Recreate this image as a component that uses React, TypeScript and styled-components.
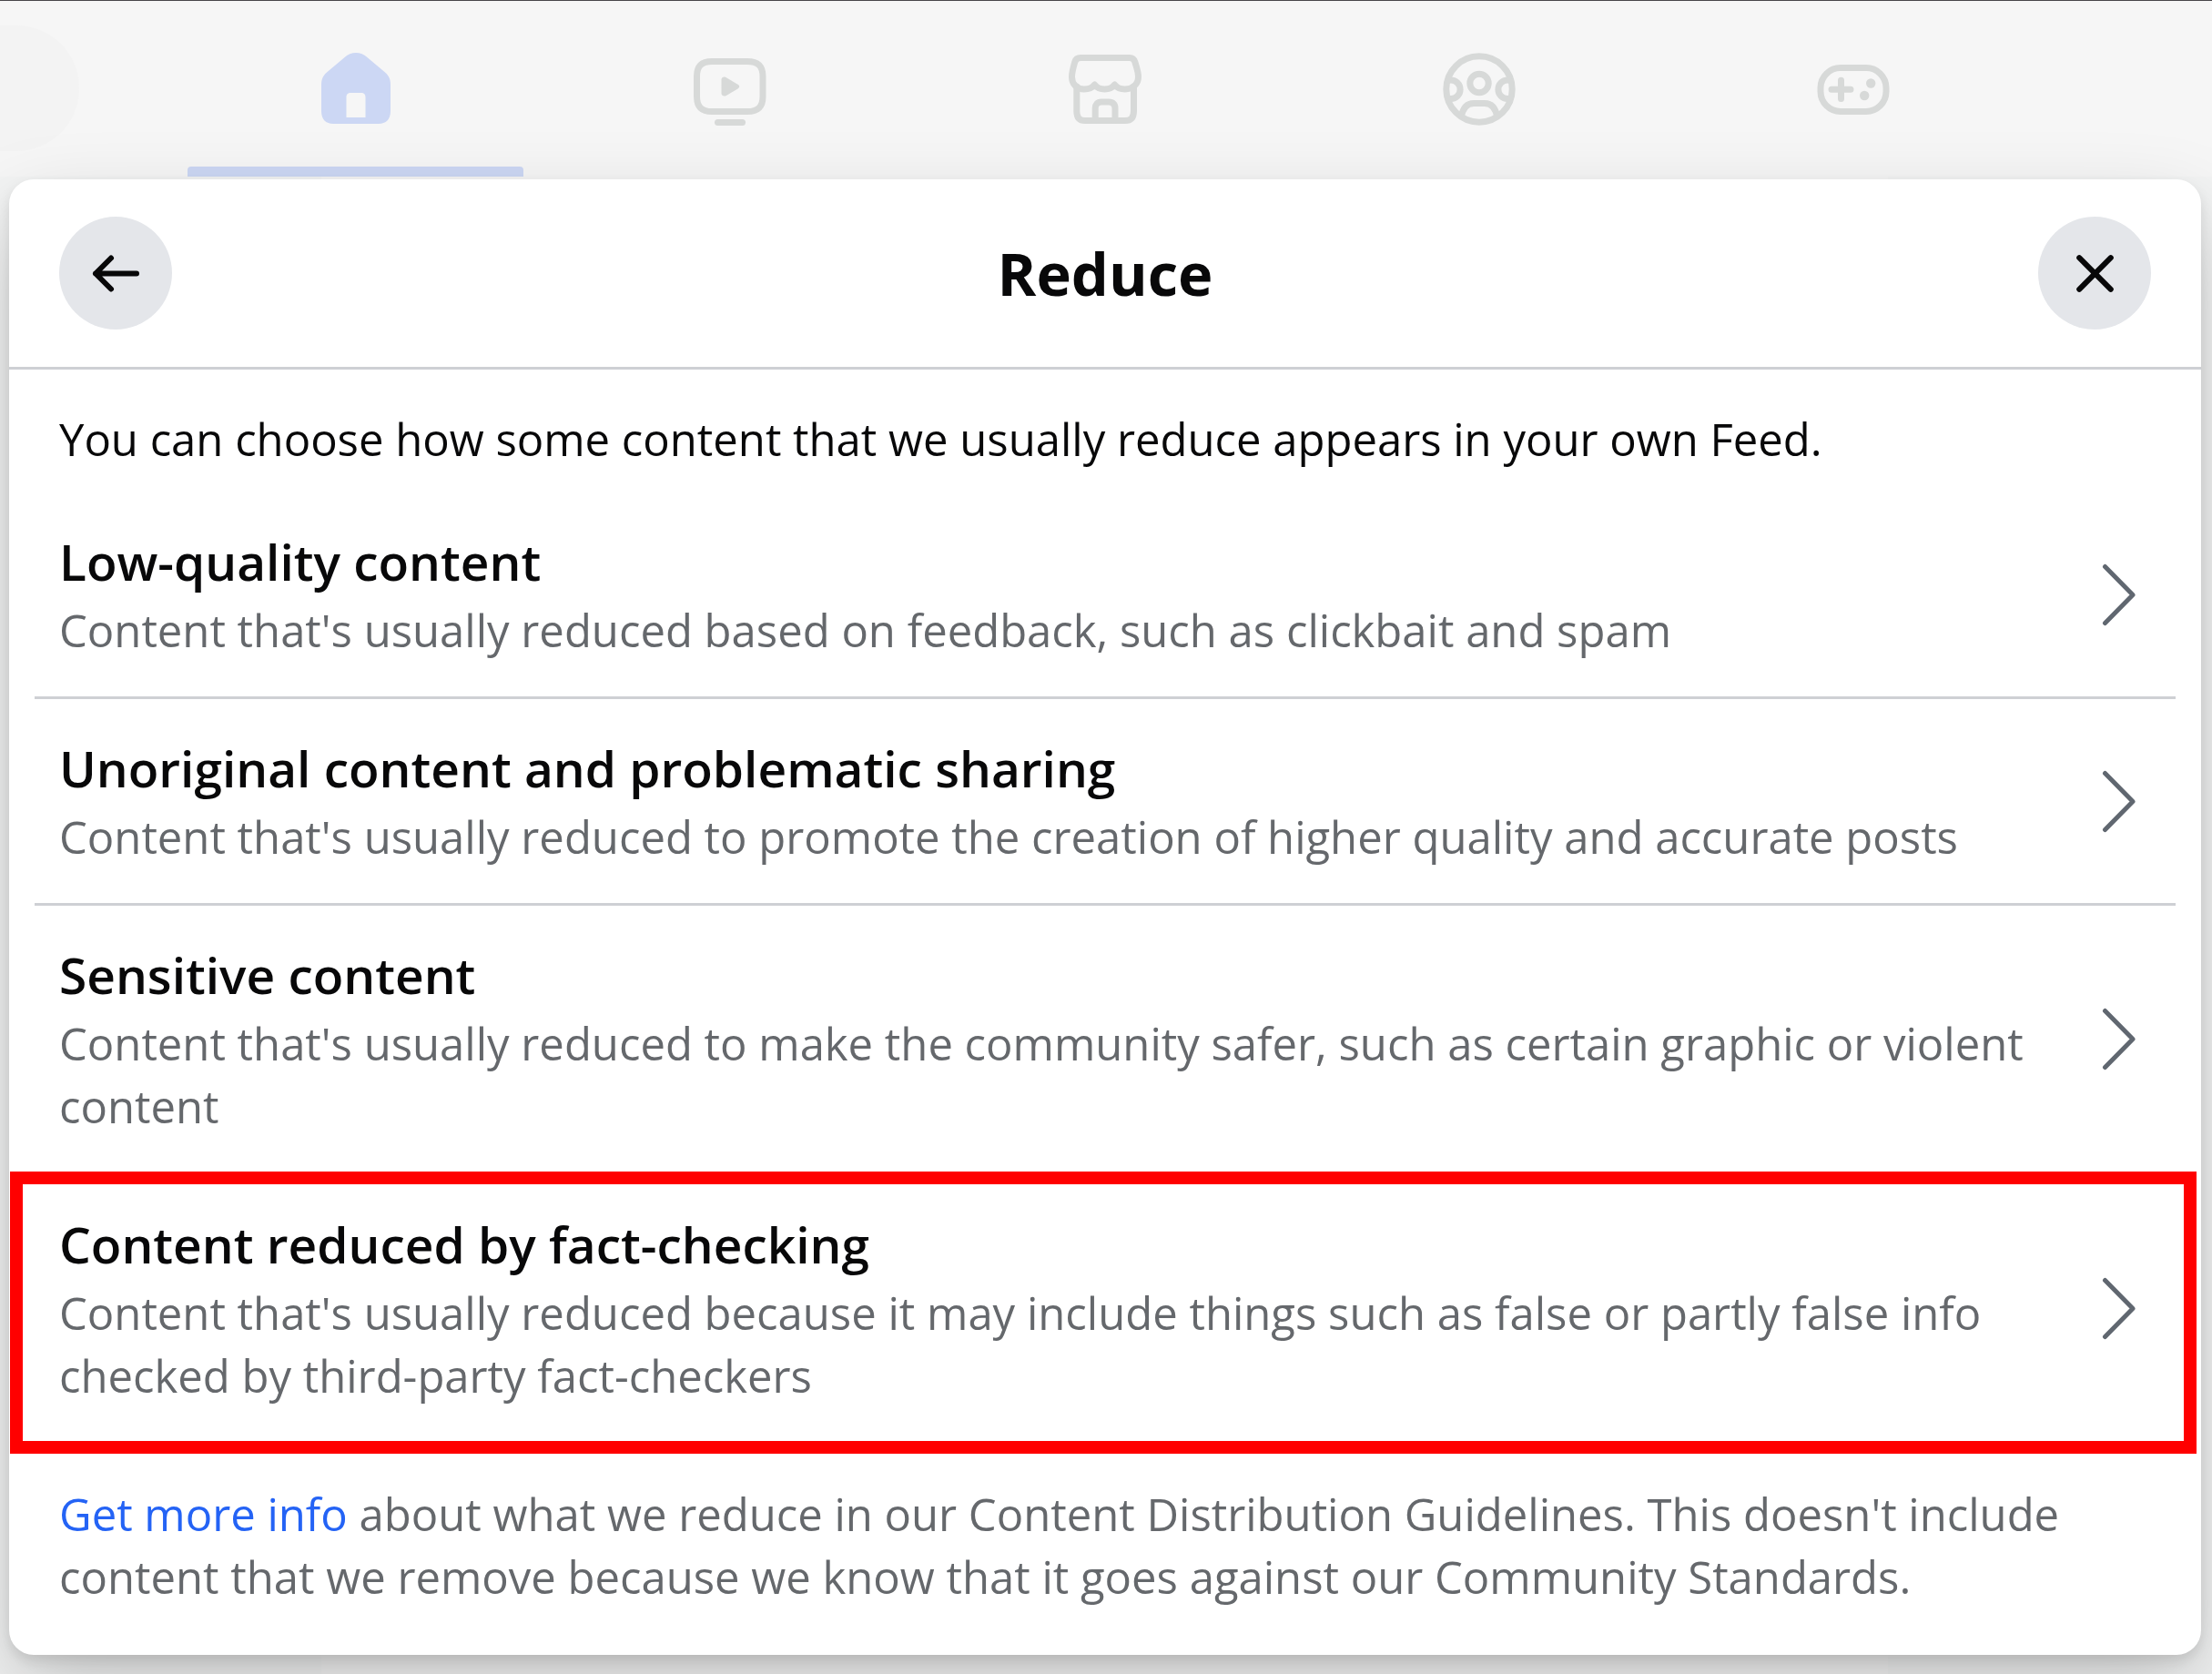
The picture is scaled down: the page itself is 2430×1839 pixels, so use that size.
import React from "react";
import styled, { createGlobalStyle, css } from "styled-components";

const GlobalStyle = createGlobalStyle`
  *, *::before, *::after { box-sizing: border-box; }
  body {
    margin: 0;
    background: #f3f4f4;
    color: #080809;
    font-family: "Open Sans", "Noto Sans", sans-serif;
    font-size: 49px;
    line-height: 69px;
  }
  h1, h2, p, ul { margin: 0; padding: 0; }
  button { font: inherit; color: inherit; border: 0; padding: 0; cursor: pointer; }
`;

const Page = styled.div`
  position: relative;
  display: flex;
  flex-direction: column;
  min-height: 100vh;
  overflow: hidden;
`;

const TopBar = styled.header`
  display: flex;
  align-items: flex-start;
  height: 194px;
  border-top: 1px solid #48464a;
  background: #f6f6f6;
`;

const SearchPill = styled.div`
  flex: none;
  width: 87px;
  height: 138px;
  margin-top: 27px;
  border-radius: 0 69px 69px 0;
  background: #f3f3f3;
`;

const Tabs = styled.nav`
  flex: 1;
  display: flex;
  align-self: stretch;
  padding: 0 188px 0 98px;
`;

const Tab = styled.a<{ $active?: boolean }>`
  flex: 1;
  display: flex;
  flex-direction: column;
  align-items: center;
  justify-content: space-between;
  padding: 54px 21px 0;
  color: ${(p) => (p.$active ? "#ccd7f4" : "#d7d9d8")};

  &::after {
    content: "";
    align-self: stretch;
    height: 11px;
    border-radius: 4px 4px 0 0;
    background: ${(p) => (p.$active ? "#ccd7f4" : "transparent")};
  }
`;

const TabIcon = styled.svg`
  width: 84px;
  height: 84px;
  fill: none;
  stroke: currentColor;
  stroke-width: 7;
  stroke-linecap: round;
  stroke-linejoin: round;
`;

const Feed = styled.main`
  flex: 1;
  display: flex;
  padding: 0 356px 0 353px;
`;

const FeedCard = styled.div`
  flex: 1;
  background: #f6f6f6;
`;

const Overlay = styled.div`
  position: absolute;
  inset: 0;
  padding: 197px 12px 21px 10px;
`;

const Dialog = styled.section`
  border-radius: 27px;
  background: #fff;
  box-shadow: 0 41px 96px rgba(0, 0, 0, 0.2), 0 7px 14px rgba(0, 0, 0, 0.1);
`;

const DialogHeader = styled.div`
  display: flex;
  align-items: center;
  justify-content: space-between;
  height: 209px;
  padding: 0 55px;
  border-bottom: 3px solid #ced0d4;
`;

const Title = styled.h1`
  font-size: 65px;
  line-height: 84px;
  font-weight: 700;
`;

const RoundButton = styled.button`
  display: grid;
  place-items: center;
  width: 124px;
  height: 124px;
  border-radius: 50%;
  background: #e4e6ea;
`;

const Glyph = styled.svg<{ $tone?: string; $weight: number }>`
  flex: none;
  width: 69px;
  height: 69px;
  fill: none;
  stroke: ${(p) => p.$tone ?? "#080809"};
  stroke-width: ${(p) => p.$weight};
  stroke-linecap: round;
  stroke-linejoin: round;
`;

const Intro = styled.p`
  padding: 42px 55px 24px;
`;

const Options = styled.ul`
  list-style: none;
  padding: 0 28px;
`;

const highlight = css`
  &::after {
    content: "";
    position: absolute;
    inset: -4px -23px -13px -27px;
    border: 14px solid #ff0000;
    pointer-events: none;
  }
`;

const Option = styled.li<{ $highlighted?: boolean }>`
  position: relative;
  & + & { border-top: 3px solid #ced0d4; }
  ${(p) => p.$highlighted && highlight}
`;

const OptionButton = styled.button`
  display: flex;
  align-items: center;
  gap: 60px;
  width: 100%;
  padding: 0 27px;
  background: transparent;
  text-align: left;
`;

const OptionText = styled.span`
  flex: 1;
  display: block;
  padding: 34px 0 38px;
`;

const OptionTitle = styled.span`
  display: block;
  font-size: 55px;
  line-height: 83px;
  font-weight: 600;
`;

const OptionDetail = styled.span`
  display: block;
  color: #65686c;
`;

const Footnote = styled.p`
  padding: 45px 55px 51px;
  color: #65686c;
`;

const InfoLink = styled.a`
  color: #2463f5;
  text-decoration: none;
`;

const options = [
  {
    title: "Low-quality content",
    detail: "Content that's usually reduced based on feedback, such as clickbait and spam",
  },
  {
    title: "Unoriginal content and problematic sharing",
    detail: "Content that's usually reduced to promote the creation of higher quality and accurate posts",
  },
  {
    title: "Sensitive content",
    detail:
      "Content that's usually reduced to make the community safer, such as certain graphic or violent content",
  },
  {
    title: "Content reduced by fact-checking",
    detail:
      "Content that's usually reduced because it may include things such as false or partly false info checked by third-party fact-checkers",
    highlighted: true,
  },
];

const tabs = [
  {
    label: "Home",
    active: true,
    icon: (
      <path
        fill="currentColor"
        stroke="none"
        fillRule="evenodd"
        d="M29 8.5C37 1.2 47 1.2 55 8.5L74 24.5C78 28 80 32 80 38V67C80 76 75 81 67 81H17C9 81 4 76 4 67V38C4 32 6 28 10 24.5ZM31.5 74V52C31.5 48.5 33 47 36.5 47H47.5C51 47 52.5 48.5 52.5 52V74Z"
      />
    ),
  },
  {
    label: "Video",
    icon: (
      <>
        <path d="M22 12.5H61C73 12.5 78 18 78 29V51C78 62 73 67.5 61 67.5H22C10.5 67.5 5.500 62 5.5 51V29C5.5 18 10.5 12.5 22 12.5Z" />
        <path d="M28.5 79.5H55.5" />
        <path
          fill="currentColor"
          stroke="none"
          d="M32.5 32.5C32.5 30 35 28.8 37.5 30L50.5 37.8C52.8 39.2 52.8 41 50.5 42.4L37.5 50.2C35 51.2 32.5 50 32.5 47.5Z"
        />
      </>
    ),
  },
  {
    label: "Marketplace",
    icon: (
      <>
        <path d="M15 8.5H69C72 8.5 74 10.5 74.8 13C76.5 19 78.5 24 78.5 29.5C78.5 37.5 72 43 64 43C59 43 55 41.5 52.5 38C50 41.5 46 43 41.5 43C37 43 33 41.5 30.5 38C28 41.5 24 43 19 43C11 43 5.5 37.5 5.5 29.5C5.5 24 7 19 8.8 13C9.5 10.5 11.5 8.5 15 8.5Z" />
        <path d="M10.8 40V67C10.8 74.5 14 77.5 20 77.5H64C70 77.5 73.5 74.5 73.5 67V40" />
        <path d="M31.2 77.5V64C31.2 59.5 33.5 57 38 57H46C50.5 57 53 59.5 53 64V77.5" />
      </>
    ),
  },
  {
    label: "Groups",
    icon: (
      <>
        <clipPath id="groups-ring">
          <circle cx="42" cy="43" r="38" />
        </clipPath>
        <circle cx="42" cy="43" r="36.2" />
        <circle cx="42" cy="36.5" r="10.2" />
        <g clipPath="url(#groups-ring)">
          <circle cx="10.9" cy="43.3" r="10.2" />
          <circle cx="73.1" cy="43.3" r="10.2" />
          <path d="M22 74C24 63 29.5 58.5 36 58.5H48C54.5 58.5 60 63 62 74" />
        </g>
      </>
    ),
  },
  {
    label: "Gaming",
    icon: (
      <>
        <rect x="6" y="19.5" width="72" height="48" rx="22" />
        <path d="M18 43.3H39M28.5 33.2V53.5" />
        <g fill="currentColor" stroke="none">
          <circle cx="61.2" cy="36.5" r="5.2" />
          <circle cx="54.2" cy="50" r="5.2" />
        </g>
      </>
    ),
  },
];

export default function App() {
  return (
    <Page>
      <GlobalStyle />
      <TopBar>
        <SearchPill />
        <Tabs aria-label="Main">
          {tabs.map((tab) => (
            <Tab key={tab.label} href="#" aria-label={tab.label} $active={tab.active}>
              <TabIcon viewBox="0 0 84 84" aria-hidden="true">
                {tab.icon}
              </TabIcon>
            </Tab>
          ))}
        </Tabs>
      </TopBar>
      <Feed>
        <FeedCard />
      </Feed>
      <Overlay>
        <Dialog role="dialog" aria-labelledby="dialog-title">
          <DialogHeader>
            <RoundButton aria-label="Back">
              <Glyph $weight={6} viewBox="0 0 69 69" aria-hidden="true">
                <path d="M57 34.5H12M29 17.5L12 34.5L29 51.5" />
              </Glyph>
            </RoundButton>
            <Title id="dialog-title">Reduce</Title>
            <RoundButton aria-label="Close">
              <Glyph $weight={6} viewBox="0 0 69 69" aria-hidden="true">
                <path d="M17.2 17.2L51.8 51.8M51.8 17.2L17.2 51.8" />
              </Glyph>
            </RoundButton>
          </DialogHeader>
          <Intro>You can choose how some content that we usually reduce appears in your own Feed.</Intro>
          <Options>
            {options.map((option) => (
              <Option key={option.title} $highlighted={option.highlighted}>
                <OptionButton>
                  <OptionText>
                    <OptionTitle>{option.title}</OptionTitle>
                    <OptionDetail>{option.detail}</OptionDetail>
                  </OptionText>
                  <Glyph $weight={5} $tone="#606770" viewBox="0 0 69 69" aria-hidden="true">
                    <path d="M18.5 3.5L49 34.5L18.5 65.5" />
                  </Glyph>
                </OptionButton>
              </Option>
            ))}
          </Options>
          <Footnote>
            <InfoLink href="#">Get more info</InfoLink> about what we reduce in our Content Distribution
            Guidelines. This doesn't include content that we remove because we know that it goes against our
            Community Standards.
          </Footnote>
        </Dialog>
      </Overlay>
    </Page>
  );
}
